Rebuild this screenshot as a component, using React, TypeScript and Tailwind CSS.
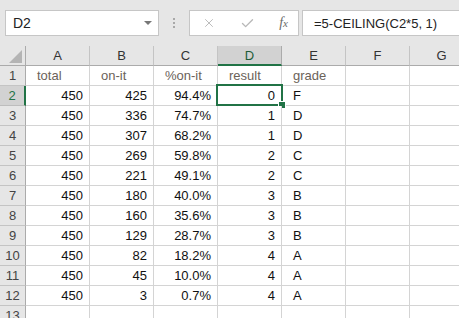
import { Check, X } from 'lucide-react';

const cols = ['A', 'B', 'C', 'D', 'E', 'F', 'G'];

const header = ['total', 'on-it', '%on-it', 'result', 'grade'];

const rows: [number, number, string, number, string][] = [
  [450, 425, '94.4%', 0, 'F'],
  [450, 336, '74.7%', 1, 'D'],
  [450, 307, '68.2%', 1, 'D'],
  [450, 269, '59.8%', 2, 'C'],
  [450, 221, '49.1%', 2, 'C'],
  [450, 180, '40.0%', 3, 'B'],
  [450, 160, '35.6%', 3, 'B'],
  [450, 129, '28.7%', 3, 'B'],
  [450, 82, '18.2%', 4, 'A'],
  [450, 45, '10.0%', 4, 'A'],
  [450, 3, '0.7%', 4, 'A'],
];

function RowHead({ n, active }: { n: number; active?: boolean }) {
  return (
    <div
      className={
        active
          ? 'w-[26px] h-[20px] shrink-0 flex items-center justify-center bg-[#d2d2d2] border-r-2 border-r-[#217346] border-b border-b-[#bdbdbd] text-[#217346]'
          : 'w-[26px] h-[20px] shrink-0 flex items-center justify-center bg-[#e6e6e6] border-r border-r-[#ababab] border-b border-b-[#c4c4c4] text-[#444]'
      }
    >
      {n}
    </div>
  );
}

function Cell({ children, right }: { children?: React.ReactNode; right?: boolean }) {
  return (
    <div
      className={
        right
          ? 'w-[64px] h-[20px] shrink-0 flex items-center justify-end pr-[6px] bg-white border-r border-b border-[#d4d4d4] text-[#111]'
          : 'w-[64px] h-[20px] shrink-0 flex items-center pl-[11px] bg-white border-r border-b border-[#d4d4d4] text-[#111]'
      }
    >
      {children}
    </div>
  );
}

export default function App() {
  return (
    <div className="w-[459px] h-[318px] overflow-hidden bg-[#e6e6e6] font-['Liberation_Sans',Arial,sans-serif] text-[13px] leading-none">
      {/* formula bar */}
      <div className="h-[46px] flex items-start pt-[10px] pl-[5px] overflow-hidden">
        <div className="w-[154px] h-[26px] shrink-0 bg-white border border-[#c6c6c6] flex items-center justify-between pl-[7px] pr-[6px] text-[14px] text-[#222]">
          <span>D2</span>
          <div className="w-0 h-0 border-l-[4px] border-r-[4px] border-t-[4px] border-l-transparent border-r-transparent border-t-[#777]" />
        </div>
        <div className="w-[30px] h-[26px] shrink-0 flex flex-col items-center justify-center gap-[2px]">
          <div className="w-[2px] h-[2px] bg-[#a8a8a8]" />
          <div className="w-[2px] h-[2px] bg-[#a8a8a8]" />
          <div className="w-[2px] h-[2px] bg-[#a8a8a8]" />
        </div>
        <div className="w-[110px] h-[26px] shrink-0 bg-white border border-[#c6c6c6] flex items-center pl-[12px] pr-[10px] justify-between text-[#b8b8b8]">
          <X size={14} strokeWidth={1.6} />
          <Check size={15} strokeWidth={2.2} />
          <span className="font-['Liberation_Serif',serif] italic text-[14px] text-[#6a6a6a]">
            f<span className="text-[11px]">x</span>
          </span>
        </div>
        <div className="w-[180px] h-[26px] shrink-0 ml-[3px] bg-white border border-[#c6c6c6] flex items-center pl-[11px] text-[13px] text-[#222]">
          =5-CEILING(C2*5, 1)
        </div>
      </div>

      {/* column headers */}
      <div className="flex">
        <div className="w-[26px] h-[20px] shrink-0 flex items-end justify-end pr-[3px] pb-[2px] bg-[#e6e6e6] border-r border-r-[#ababab] border-b border-b-[#ababab]">
          <svg width="13" height="13" viewBox="0 0 13 13">
            <polygon points="13,0 13,13 0,13" fill="#b4b4b4" />
          </svg>
        </div>
        {cols.map(c =>
          c === 'D' ? (
            <div
              key={c}
              className="w-[64px] h-[20px] shrink-0 flex items-center justify-center bg-[#d2d2d2] border-r border-r-[#ababab] border-b-2 border-b-[#217346] text-[#1e5c38]"
            >
              {c}
            </div>
          ) : (
            <div
              key={c}
              className="w-[64px] h-[20px] shrink-0 flex items-center justify-center bg-[#e6e6e6] border-r border-r-[#c4c4c4] border-b border-b-[#ababab] text-[#333]"
            >
              {c}
            </div>
          )
        )}
      </div>

      {/* row 1 */}
      <div className="flex">
        <RowHead n={1} />
        {header.map(h => (
          <div
            key={h}
            className="w-[64px] h-[20px] shrink-0 flex items-center pl-[11px] bg-white border-r border-b border-[#d4d4d4] text-[#6b6259]"
          >
            {h}
          </div>
        ))}
        <Cell />
        <Cell />
      </div>

      {rows.map((r, i) => (
        <div key={i} className="flex">
          <RowHead n={i + 2} active={i === 0} />
          <Cell right>{r[0]}</Cell>
          <Cell right>{r[1]}</Cell>
          <Cell right>{r[2]}</Cell>
          <div className="w-[64px] h-[20px] shrink-0 relative flex items-center justify-end pr-[6px] bg-white border-r border-b border-[#d4d4d4] text-[#111]">
            {r[3]}
            {i === 0 && (
              <>
                <div className="absolute left-[-2px] top-[-2px] w-[67px] h-[22px] border-2 border-[#217346]" />
                <div className="absolute left-[61px] top-[16px] w-[6px] h-[6px] bg-[#217346] outline outline-1 outline-white" />
              </>
            )}
          </div>
          <Cell>{r[4]}</Cell>
          <Cell />
          <Cell />
        </div>
      ))}

      {/* row 13 */}
      <div className="flex">
        <RowHead n={13} />
        {cols.map(c => (
          <Cell key={c} />
        ))}
      </div>
    </div>
  );
}
